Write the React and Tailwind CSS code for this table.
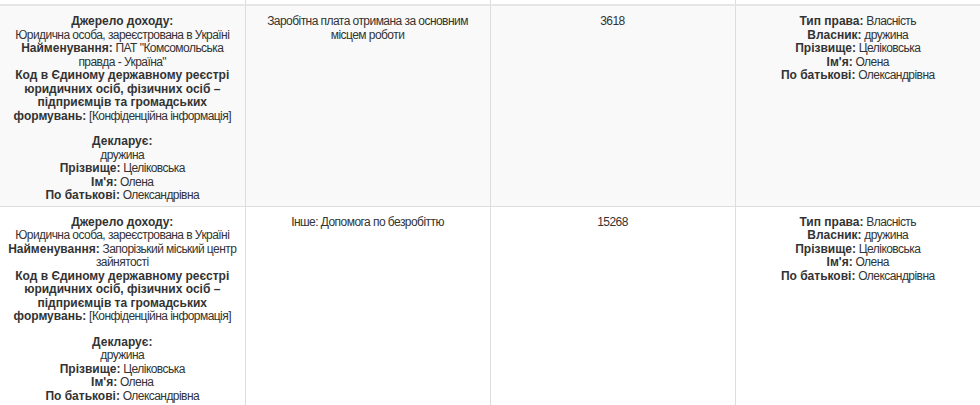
import React from 'react';

const rows = [
  {
    name: 'ПАТ "Комсомольська правда - Україна"',
    kind: 'Заробітна плата отримана за основним місцем роботи',
    amount: '3618',
    striped: true,
  },
  {
    name: 'Запорізький міський центр зайнятості',
    kind: 'Інше: Допомога по безробіттю',
    amount: '15268',
    striped: false,
  },
];

const L = ({ children }) => <b className="font-bold tracking-normal">{children}</b>;

const Person = () => (
  <>
    <L>Прізвище:</L> Целіковська
    <br />
    <L>Ім'я:</L> Олена
    <br />
    <L>По батькові:</L> Олександрівна
  </>
);

const cell = 'border border-[#dddddd] align-top text-center px-2 pt-[9px] pb-[3px]';

export default function App() {
  return (
    <div className="bg-white min-h-screen overflow-hidden text-[12px] leading-[13.5px] tracking-[-0.55px] text-[#333] font-['Liberation_Sans',Arial,sans-serif]">
      <table className="w-full table-fixed border-collapse">
        <tbody>
          <tr className="h-[5px]">
            <td className="border-x border-[#dddddd] border-l-0 p-0" />
            <td className="border-x border-[#dddddd] p-0" />
            <td className="border-x border-[#dddddd] p-0" />
            <td className="border-x border-[#dddddd] border-r-0 p-0" />
          </tr>
          {rows.map((r, i) => (
            <tr key={i} className={r.striped ? 'bg-[#f9f9f9]' : 'bg-white'}>
              <td className={`${cell} border-l-0 ${i === 0 ? 'border-t-2 border-t-[#e6e6e6]' : ''}`}>
                <L>Джерело доходу:</L>
                <br />
                Юридична особа, зареєстрована в Україні
                <br />
                <L>Найменування:</L> {r.name}
                <br />
                <L>Код в Єдиному державному реєстрі юридичних осіб, фізичних осіб – підприємців та громадських формувань:</L>{' '}
                [Конфіденційна інформація]
                <div className="mt-[12px]">
                  <L>Декларує:</L>
                  <br />
                  дружина
                  <br />
                  <Person />
                </div>
              </td>
              <td className={`${cell} ${i === 0 ? 'border-t-2 border-t-[#e6e6e6]' : ''}`}>{r.kind}</td>
              <td className={`${cell} ${i === 0 ? 'border-t-2 border-t-[#e6e6e6]' : ''}`}>{r.amount}</td>
              <td className={`${cell} border-r-0 ${i === 0 ? 'border-t-2 border-t-[#e6e6e6]' : ''}`}>
                <L>Тип права:</L> Власність
                <br />
                <L>Власник:</L> дружина
                <br />
                <Person />
              </td>
            </tr>
          ))}
        </tbody>
      </table>
    </div>
  );
}
